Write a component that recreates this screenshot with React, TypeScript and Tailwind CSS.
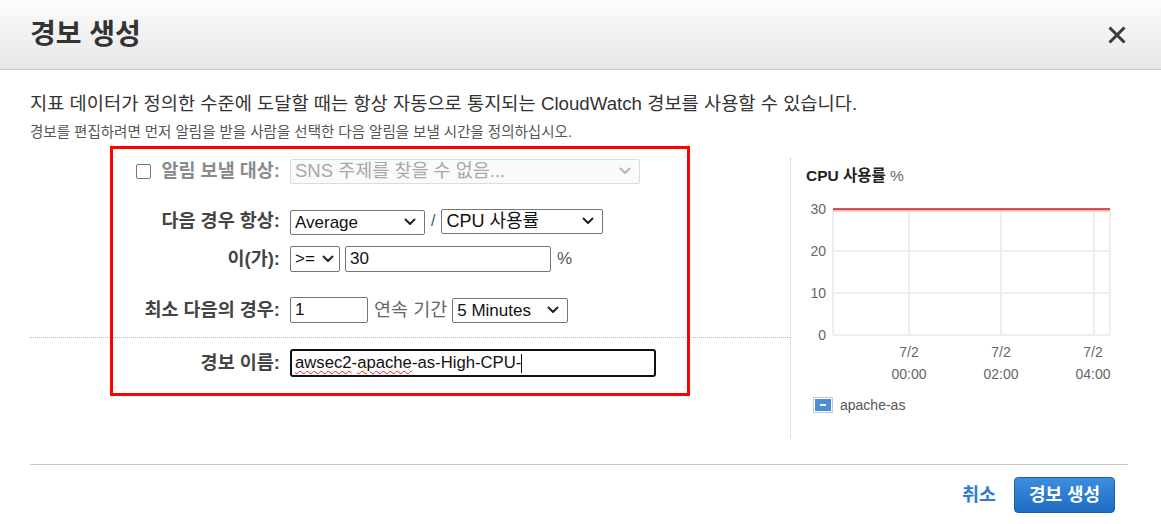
import React from "react";

const Chevron = ({ color = "#222" }: { color?: string }) => (
  <svg width="12" height="8" viewBox="0 0 12 8" fill="none">
    <path d="M1.5 1.5 L6 6 L10.5 1.5" stroke={color} strokeWidth="2" strokeLinecap="round" strokeLinejoin="round" />
  </svg>
);

const FakeSelect = ({
  value,
  width,
  size = "text-[17px]",
  disabled = false,
}: {
  value: string;
  width: string;
  size?: string;
  disabled?: boolean;
}) => (
  <div
    className={`${width} h-[25px] flex items-center justify-between pl-[4px] pr-[8px] rounded-[2px] border ${
      disabled ? "border-[#dcdcdc] bg-[#fafafa] text-[#a8a8a8]" : "border-[#767676] bg-white text-[#111]"
    } ${size} leading-none`}
  >
    <span className="whitespace-nowrap">{value}</span>
    <Chevron color={disabled ? "#b5b5b5" : "#222"} />
  </div>
);

const Label = ({ children, muted = false }: { children: React.ReactNode; muted?: boolean }) => (
  <span className={`text-[18.5px] font-bold leading-none whitespace-nowrap ${muted ? "text-[#8a8a8a]" : "text-[#444]"}`}>
    {children}
  </span>
);

const App = () => {
  return (
    <div className="relative w-[1161px] h-[524px] overflow-hidden bg-white font-['Liberation_Sans','Noto_Sans_CJK_KR',sans-serif]">
      {/* header */}
      <div className="h-[70px] flex items-center justify-between pl-[30px] pr-[35px] bg-gradient-to-b from-[#fcfcfc] to-[#e7e7e7] border-b border-[#cdcdcd]">
        <h1 className="text-[28px] font-bold text-[#333] leading-none">경보 생성</h1>
        <svg width="18" height="18" viewBox="0 0 18 18">
          <path d="M1.5 1.5 L16.5 16.5 M16.5 1.5 L1.5 16.5" stroke="#3a3a3a" strokeWidth="3" />
        </svg>
      </div>

      <div className="pl-[30px] pr-[33px]">
        <p className="mt-[22px] text-[18.7px] leading-[24px] text-[#333] whitespace-nowrap">
          지표 데이터가 정의한 수준에 도달할 때는 항상 자동으로 통지되는 CloudWatch 경보를 사용할 수 있습니다.
        </p>
        <p className="mt-[7px] text-[14.5px] leading-[18px] text-[#555] whitespace-nowrap">
          경보를 편집하려면 먼저 알림을 받을 사람을 선택한 다음 알림을 보낼 시간을 정의하십시오.
        </p>

        <div className="flex mt-[17px]">
          {/* form */}
          <div className="w-[760px]">
            <div className="h-[26px] flex items-center">
              <div className="w-[250px] flex items-center justify-end gap-[10px]">
                <span className="w-[15px] h-[15px] border border-[#767676] rounded-[2px] bg-white" />
                <Label muted>알림 보낼 대상:</Label>
              </div>
              <div className="ml-[10px]">
                <FakeSelect value="SNS 주제를 찾을 수 없음..." width="w-[350px]" size="text-[18.5px]" disabled />
              </div>
            </div>

            <div className="h-[26px] mt-[24px] flex items-center">
              <div className="w-[250px] flex justify-end">
                <Label>다음 경우 항상:</Label>
              </div>
              <div className="ml-[10px] flex items-center">
                <div className="mt-[2px]">
                  <FakeSelect value="Average" width="w-[135px]" />
                </div>
                <span className="mx-[6px] text-[16px] text-[#555]">/</span>
                <FakeSelect value="CPU 사용률" width="w-[162px]" size="text-[18px]" />
              </div>
            </div>

            <div className="h-[26px] mt-[12px] flex items-center">
              <div className="w-[250px] flex justify-end">
                <Label>이(가):</Label>
              </div>
              <div className="ml-[10px] flex items-center">
                <div className="w-[50px] h-[26px] flex items-center justify-between pl-[4px] pr-[5px] rounded-[2px] border border-[#767676] text-[17px] text-[#111]">
                  <span>&gt;=</span>
                  <Chevron />
                </div>
                <div className="ml-[5px] w-[206px] h-[26px] flex items-center pl-[4px] rounded-[2px] border border-[#767676] text-[17px] text-[#111]">
                  30
                </div>
                <span className="ml-[6px] text-[17px] text-[#555]">%</span>
              </div>
            </div>

            <div className="h-[26px] mt-[25px] flex items-center">
              <div className="w-[250px] flex justify-end">
                <Label>최소 다음의 경우:</Label>
              </div>
              <div className="ml-[10px] flex items-center">
                <div className="w-[78px] h-[26px] flex items-center pl-[4px] rounded-[2px] border border-[#767676] text-[17px] text-[#111]">
                  1
                </div>
                <span className="ml-[6px] mr-[5px] text-[18.5px] leading-none text-[#666] whitespace-nowrap">연속 기간</span>
                <FakeSelect value="5 Minutes" width="w-[116px]" />
              </div>
            </div>

            <div className="mt-[14px] border-t border-dotted border-[#bdbdbd]" />

            <div className="h-[28px] mt-[11px] flex items-center">
              <div className="w-[250px] flex justify-end">
                <Label>경보 이름:</Label>
              </div>
              <div className="ml-[10px] w-[366px] h-[28px] flex items-center pl-[3px] rounded-[3px] border-2 border-[#111] text-[16.7px] text-[#111]">
                <span className="underline decoration-wavy decoration-[#e02020] decoration-1 underline-offset-2">awsec2</span>
                <span>-</span>
                <span className="underline decoration-wavy decoration-[#e02020] decoration-1 underline-offset-2">apache</span>
                <span>-as-High-CPU-</span>
                <span className="w-[1px] h-[19px] bg-[#111]" />
              </div>
            </div>
          </div>

          {/* chart */}
          <div className="w-[338px] h-[280px] border-l border-dotted border-[#c4c4c4] pl-[15px]">
            <div className="mt-[9px] h-[18px] text-[15.5px] leading-[18px] whitespace-nowrap">
              <span className="font-bold text-[#222]">CPU 사용률</span>
              <span className="text-[#666]"> %</span>
            </div>
            <svg width="320" height="190" className="mt-[10px] block" fontFamily="Liberation Sans, sans-serif">
              <g stroke="#eeeeee" strokeWidth="2">
                <line x1="27" y1="56" x2="304" y2="56" />
                <line x1="27" y1="98" x2="304" y2="98" />
                <line x1="27" y1="140" x2="304" y2="140" />
                <line x1="27" y1="14" x2="27" y2="140" />
                <line x1="103" y1="14" x2="103" y2="140" />
                <line x1="195" y1="14" x2="195" y2="140" />
                <line x1="288" y1="14" x2="288" y2="140" />
                <line x1="304" y1="14" x2="304" y2="140" />
              </g>
              <line x1="27" y1="15" x2="304" y2="15" stroke="#f3b4b4" strokeWidth="3" />
              <line x1="27" y1="14" x2="304" y2="14" stroke="#c8262b" strokeWidth="1.3" />
              <g fill="#666" fontSize="14" textAnchor="end">
                <text x="20" y="19">30</text>
                <text x="20" y="61">20</text>
                <text x="20" y="103">10</text>
                <text x="20" y="145">0</text>
              </g>
              <g fill="#666" fontSize="14" textAnchor="middle">
                <text x="103" y="162">7/2</text>
                <text x="103" y="184">00:00</text>
                <text x="195" y="162">7/2</text>
                <text x="195" y="184">02:00</text>
                <text x="287" y="162">7/2</text>
                <text x="287" y="184">04:00</text>
              </g>
            </svg>
            <div className="mt-[12px] ml-[7px] flex items-center gap-[7px]">
              <span className="w-[20px] h-[16px] border border-[#c8c8c8] p-[1px] flex">
                <span className="flex-1 bg-[#4a8fd4] flex items-center justify-center">
                  <span className="w-[6px] h-[2px] bg-white" />
                </span>
              </span>
              <span className="text-[14px] text-[#555] leading-none">apache-as</span>
            </div>
          </div>
        </div>

        {/* footer */}
        <div className="mt-[26px] border-t border-[#c8c8c8]" />
        <div className="mt-[12px] pr-[13px] flex items-center justify-end gap-[18px]">
          <span className="text-[18.5px] font-bold text-[#2d7dd2]">취소</span>
          <button className="w-[101px] h-[36px] rounded-[4px] border border-[#1b5fa6] bg-gradient-to-b from-[#3c8de0] to-[#1f6cc2] text-white text-[18px] font-bold">
            경보 생성
          </button>
        </div>
      </div>

      {/* annotation */}
      <div className="absolute left-[110px] top-[146px] w-[580px] h-[250px] border-[3px] border-[#ff0000] pointer-events-none" />
    </div>
  );
};

export default App;
